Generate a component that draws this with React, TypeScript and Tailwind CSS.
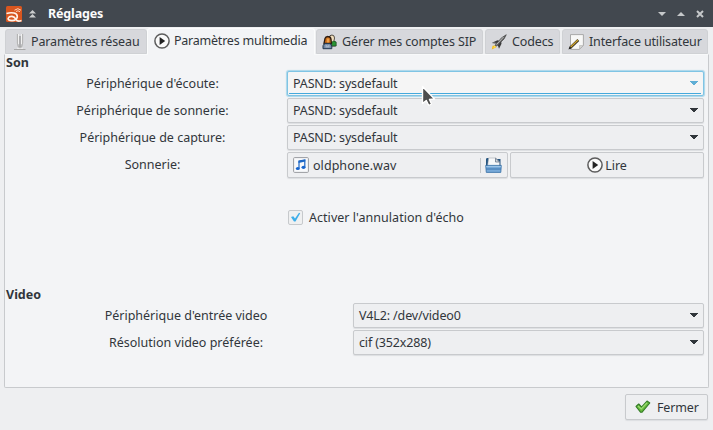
import React from "react";

const PlayIcon = () => (
  <svg width="16" height="16" viewBox="0 0 16 16" className="shrink-0">
    <circle cx="8" cy="8" r="7.1" fill="#fafafa" stroke="#5d5d5d" strokeWidth="1.5" />
    <path d="M5.6 3.9 L11.2 8 L5.6 12.1Z" fill="#222" />
  </svg>
);

const AntennaIcon = () => (
  <svg width="14" height="18" viewBox="0 0 14 18" className="shrink-0">
    <path d="M4.500 1v9q.2 3 1.500 4.500M9.500 1v9q-.2 3-1.500 4.500" fill="none" stroke="#b5b5b5" strokeWidth="1.300" />
    <path d="M5.500 1v10M8.500 1v10" stroke="#f4f4f4" strokeWidth="0.900" />
    <path d="M7 3v13" stroke="#929292" strokeWidth="1.200" />
    <path d="M1 16.500h11.500" stroke="#a8a8a8" strokeWidth="1" />
    <path d="M4 15.300h6" stroke="#eeeeee" />
  </svg>
);

const PeopleIcon = () => (
  <svg width="16" height="16" viewBox="0 0 16 16" className="shrink-0">
    <path d="M7 4Q7.500 .8 10 1q2.600.2 2.500 3l-.4 2.500 1.500 2.500v3H9z" fill="#f2dfbd" stroke="#302c26" strokeWidth=".8" />
    <path d="M9.500 12V8.500q2-2.500 4.700-.5v4z" fill="#289333" stroke="#183b1b" strokeWidth=".6" />
    <path d="M2 9.500L3 4.500Q3.500 2.400 6 2.500q3 0 3 3.200L9.500 9.500z" fill="#c76b17" stroke="#2d1d13" strokeWidth="1.3" />
    <path d="M4.800 4.500h2.400v4H4.800z" fill="#efa04b" />
    <path d="M1 14.700v-3q.8-2.200 3-2.200h3q2.400.2 2.800 2.500v2.700z" fill="#7289a5" stroke="#23384f" strokeWidth="1" />
    <path d="M3.500 10.200l2 1.600 2-1.600v3.300h-4z" fill="#a5b4c6" />
  </svg>
);

const RocketIcon = () => (
  <svg width="16" height="16" viewBox="0 0 16 16" className="shrink-0">
    <path d="M.8 15.500l.8-3.700 2.500-.4 1.200 1.800z" fill="#f7bc20" />
    <path d="M2.300 14l1.200-2.200 1 1.200z" fill="#ffef63" />
    <path d="M1 8.800l5.500-2.600 2 .8-4.500 3zM6.800 11.200l3.400-4 .3 2.500-2.500 5z" fill="#3b3b3b" />
    <path d="M4 11.300L10.500 3.800 15.300 .7l-2.200 4.200-7.300 7.200z" fill="#686868" stroke="#252525" strokeWidth=".5" />
    <path d="M5.500 10.500l7-7.500" stroke="#c8c8c8" strokeWidth=".9" />
    <path d="M1.400 9.200h3" stroke="#b6b6b6" />
  </svg>
);

const NoteIcon = () => (
  <svg width="16" height="16" viewBox="0 0 16 16" className="shrink-0">
    <path d="M2.500 .6h12.900v10.900l-3.900 3.900h-9z" fill="#f8f8f7" stroke="#a2a2a2" strokeWidth=".9" />
    <path d="M15.200 11.500h-3.700v3.700z" fill="#d5d5d3" stroke="#aaa" strokeWidth=".5" />
    <path d="M2 14L10.300 6" stroke="#302b20" strokeWidth="2.600" />
    <path d="M2.700 13L10 6" stroke="#d0a62e" strokeWidth="1.300" />
    <path d="M.5 15.500L1.400 12.700 3.200 14.400z" fill="#262626" />
  </svg>
);

const MusicIcon = () => (
  <svg width="16" height="16" viewBox="0 0 16 16" className="shrink-0">
    <rect x=".6" y=".6" width="14.800" height="14.800" rx="1" fill="#f8f9fb" stroke="#9a9ca0" />
    <path d="M6 11.300V4l5.800-1.100v7.300" fill="none" stroke="#1d67c5" strokeWidth="1.200" />
    <path d="M5.500 3.900l6.800-1.300v2L5.500 5.900z" fill="#1d67c5" />
    <ellipse cx="4.800" cy="11.500" rx="2" ry="1.600" fill="#1765cd" />
    <ellipse cx="10.500" cy="10.300" rx="2" ry="1.600" fill="#1765cd" />
  </svg>
);

const FolderIcon = () => (
  <svg width="17" height="16" viewBox="0 0 17 16" className="shrink-0">
    <path d="M1 10V1.800L2 1h3v1h10.500v8z" fill="#275782" />
    <path d="M2.500 9.500L3.600 1h7.200L14.500 5v4.500z" fill="#f7f8f9" stroke="#9299a2" strokeWidth=".5" />
    <path d="M10.500 1.200V5h4z" fill="#d4d9df" stroke="#59697c" strokeWidth=".7" />
    <path d="M.7 8.400h15.600l-.5 7H1.300z" fill="#77a9d8" stroke="#356ea5" strokeWidth=".8" />
    <path d="M1.200 9.500h14.600" stroke="#9cc4e8" />
    <path d="M1.200 12h14.600" stroke="#3c75ae" strokeWidth="1" />
  </svg>
);

const Arrow = ({ color }: { color: string }) => (
  <svg width="8" height="5" viewBox="0 0 8 5" className="shrink-0" shapeRendering="crispEdges">
    <path d="M0 0h8v2H7v1H6v1H5v1H3V4H2V3H1V2H0z" fill="none" />
    <path d="M0 0h8v1H0zM1 1h6v1H1zM2 2h4v1H2zM3 3h2v1H3z" fill={color} />
  </svg>
);

const frame = "box-border flex shrink-0 items-center rounded-[2px] border";
const idle = "border-[#c8cacd] bg-[#eeeff1] shadow-[0_1px_1px_#dcdee1]";
const focused = "border-[#7fc4e4] bg-[#f5f5f5] shadow-[0_0_1px_1px_#a9d6ea]";

function Combo({ text, width, active = false }: { text: string; width: string; active?: boolean }) {
  return (
    <div className={`relative h-[25px] justify-between pr-[5px] pl-[5px] tracking-[-0.14px] ${width} ${frame} ${active ? focused : idle}`}>
      <span>{text}</span>
      <Arrow color={active ? "#5faed5" : "#31363b"} />
      {active && <div className="absolute right-[2px] bottom-[1px] left-[1px] h-px bg-[#45a9dc]" />}
    </div>
  );
}

function Tab({ icon, text, className, active = false }: { icon: React.ReactNode; text: string; className: string; active?: boolean }) {
  return (
    <div className={`box-border flex shrink-0 items-center whitespace-nowrap rounded-t-[3px] border ${active ? "z-10 mb-[-1px] h-[27px] border-[#fbfcfc] border-b-[#f3f4f6] bg-[#f3f4f6] pb-[2px]" : "h-[25px] border-[#cfd1d4] bg-[#d7d8dc]"} ${className}`}>
      {icon}
      <span>{text}</span>
    </div>
  );
}

function FormRow({ label, labelWidth, children }: { label: string; labelWidth: string; children: React.ReactNode }) {
  return (
    <div className="flex h-[27px] items-start">
      <div className={`flex h-[25px] shrink-0 items-center justify-center ${labelWidth}`}>{label}</div>
      {children}
    </div>
  );
}

const soundLabel = "ml-[15px] mr-[2px] w-[265px]";
const videoLabel = "ml-[30px] mr-[16px] w-[302px]";

export default function App() {
  return (
    <div className="relative flex h-[430px] w-[713px] flex-col overflow-hidden whitespace-nowrap bg-[#eeeff1] font-['Noto_Sans',sans-serif] text-[12.5px] leading-[17px] text-[#31363b]">
      <header className="flex h-[27px] shrink-0 items-center bg-[#42484f] pr-[9px] pl-[6px]">
        <svg width="16" height="16" viewBox="0 0 16 16">
          <rect width="16" height="16" rx="1.500" fill="#d8561f" />
          <path d="M.5 7.500Q4.500 6.200 8 7T11.300 11Q10.500 14.500 6 14.600Q1.800 14.600 2.200 12.200Q3 10.300 6 10.400Q8.500 10.800 10 13.500T15.500 14.500" fill="none" stroke="#fff4ea" strokeWidth="1.600" />
          <path d="M8.500 4.200q3.500-3 6.500 0M10 5.500q2-1.500 4 .2" fill="none" stroke="#ffd7bd" strokeWidth="1" />
        </svg>
        <svg className="ml-[7px]" width="7" height="8" viewBox="0 0 7 8">
          <path d="M3.500 0L7 3.500H0zM3.500 4L7 7.500H0z" fill="#cbcdce" />
        </svg>
        <span className="ml-[12px] grow font-bold tracking-[-0.15px] text-[#fcfcfc]">Réglages</span>
        <svg width="46" height="8" viewBox="0 0 46 8">
          <path d="M0 2h8L4 6zM19 6h8l-4-4z" fill="#c5c8ca" />
          <path d="M39 1l6 6M45 1l-6 6" stroke="#c5c8ca" strokeWidth="2" />
        </svg>
      </header>

      <nav className="flex h-[27px] shrink-0 items-end pl-[5px]">
        <Tab className="w-[142px] gap-[4px] pl-[7px] tracking-[-0.13px]" icon={<AntennaIcon />} text="Paramètres réseau" />
        <Tab className="w-[168px] gap-[4px] pl-[6px] tracking-[-0.23px]" icon={<PlayIcon />} text="Paramètres multimedia" active />
        <Tab className="mr-[2px] ml-[1px] w-[167px] gap-[4px] pl-[5px] tracking-[-0.13px]" icon={<PeopleIcon />} text="Gérer mes comptes SIP" />
        <Tab className="mr-[2px] w-[75px] gap-[5px] pl-[5px] tracking-[-0.13px]" icon={<RocketIcon />} text="Codecs" />
        <Tab className="w-[146px] gap-[5px] pl-[5px] tracking-[-0.14px]" icon={<NoteIcon />} text="Interface utilisateur" />
      </nav>

      <main className="ml-[4px] box-border flex h-[334px] w-[705px] shrink-0 flex-col rounded-b-[2px] border border-[#c8cacd] border-t-[#f8f9fa] bg-[#f3f4f6]">
        <h2 className="h-[16px] pl-px font-bold leading-[16px]">Son</h2>
        <FormRow label="Périphérique d'écoute:" labelWidth={soundLabel}><Combo text="PASND: sysdefault" width="w-[417px]" active /></FormRow>
        <FormRow label="Périphérique de sonnerie:" labelWidth={soundLabel}><Combo text="PASND: sysdefault" width="w-[417px]" /></FormRow>
        <FormRow label="Périphérique de capture:" labelWidth={soundLabel}><Combo text="PASND: sysdefault" width="w-[417px]" /></FormRow>
        <FormRow label="Sonnerie:" labelWidth={soundLabel}>
          <div className={`h-[26px] w-[221px] gap-[4px] pr-[5px] pl-[5px] ${frame} ${idle}`}>
            <MusicIcon />
            <span className="grow tracking-[0.05px]">oldphone.wav</span>
            <i className="h-[15px] w-px bg-[#c3c6c9]" />
            <FolderIcon />
          </div>
          <div className={`ml-[2px] h-[26px] w-[194px] justify-center gap-[2px] ${frame} ${idle}`}>
            <PlayIcon />
            <span>Lire</span>
          </div>
        </FormRow>
        <label className="mt-[30px] flex h-[17px] items-center pl-[283px]">
          <span className="mr-[6px] flex h-[15px] w-[15px] items-center justify-center rounded-[2px] border border-[#c6c9cc] bg-[#eff0f1]">
            <svg width="11" height="11" viewBox="0 0 11 11"><path d="M1 5l2.300-.8L5 6.500 9 .7l1.200.6L5.500 9.600H4z" fill="#3daee9" /></svg>
          </span>
          <span className="tracking-[0.04px]">Activer l'annulation d'écho</span>
        </label>
        <h2 className="mt-[60px] h-[17px] pl-px font-bold leading-[17px]">Video</h2>
        <FormRow label="Périphérique d'entrée video" labelWidth={videoLabel}><Combo text="V4L2: /dev/video0" width="w-[351px]" /></FormRow>
        <FormRow label="Résolution video préférée:" labelWidth={videoLabel}><Combo text="cif (352x288)" width="w-[351px]" /></FormRow>
      </main>

      <footer className="mt-[6px] flex justify-end pr-[5px]">
        <div className={`h-[26px] w-[83px] gap-[6px] pl-[9px] ${frame} ${idle}`}>
          <svg width="16" height="14" viewBox="0 0 16 14">
            <path d="M1 6.500L3.700 4 6.500 7 12 1l2.800 2-7.700 9.200H5.500z" fill="#67b93d" stroke="#347d27" strokeWidth="1.100" strokeLinejoin="round" />
            <path d="M3 6l3.300 3L12 2.800" fill="none" stroke="#9ddd75" strokeWidth="1.200" />
          </svg>
          <span className="tracking-[-0.15px]">Fermer</span>
        </div>
      </footer>

      <svg className="absolute top-[85px] left-[421px]" width="16" height="23" viewBox="0 0 16 23">
        <path d="M1.500 1.500v17l3.800-3 2.500 5 2.700-1.500-2-4.500 5-.5z" fill="#4d4d4d" stroke="#fff" strokeWidth="1.400" strokeLinejoin="round" />
      </svg>
    </div>
  );
}
